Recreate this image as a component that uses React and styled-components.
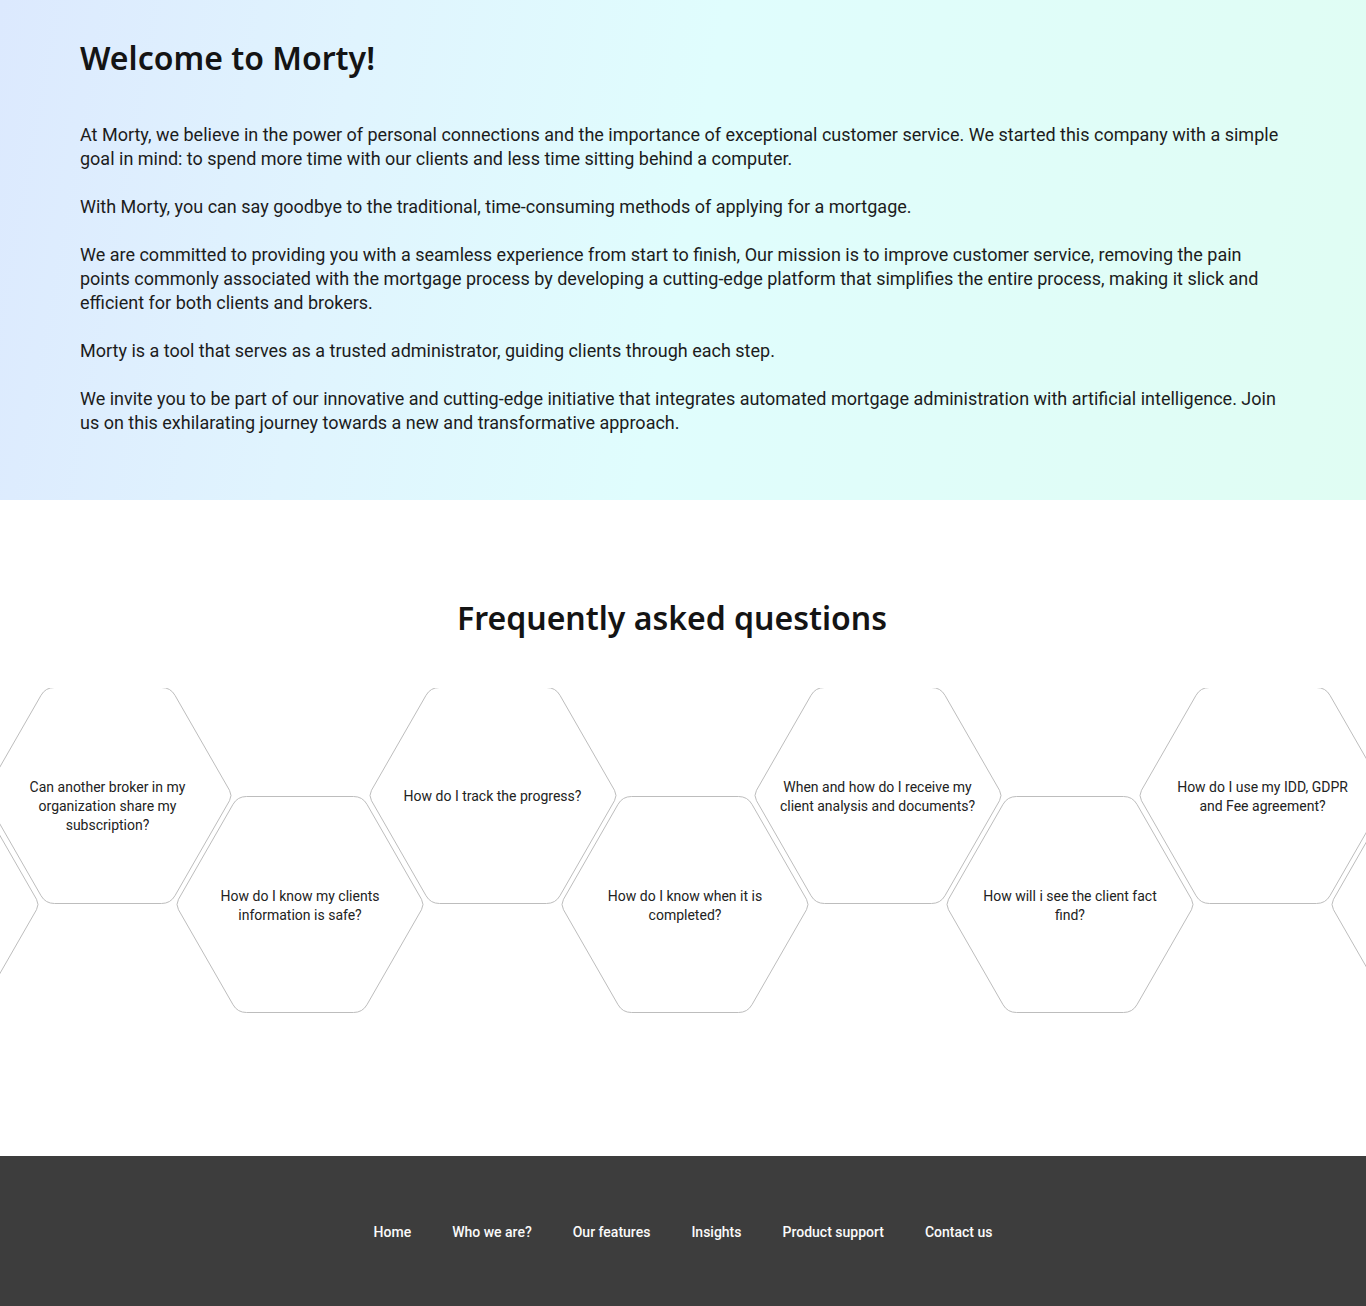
import React from 'react';
import styled, { createGlobalStyle } from 'styled-components';

const HEX_W = 250;
const HEX_H = 217;
const STEP = 192.5;

const GlobalStyle = createGlobalStyle`
    html, body { margin: 0; padding: 0; }
    body {
        font-family: Roboto, "Liberation Sans", sans-serif;
        background: #fff;
        overflow-x: hidden;
    }
    * { box-sizing: border-box; }
`

const paragraphs = [
    'At Morty, we believe in the power of personal connections and the importance of exceptional customer service. We started this company with a simple goal in mind: to spend more time with our clients and less time sitting behind a computer.',
    'With Morty, you can say goodbye to the traditional, time-consuming methods of applying for a mortgage.',
    'We are committed to providing you with a seamless experience from start to finish, Our mission is to improve customer service, removing the pain points commonly associated with the mortgage process by developing a cutting-edge platform that simplifies the entire process, making it slick and efficient for both clients and brokers.',
    'Morty is a tool that serves as a trusted administrator, guiding clients through each step.',
    'We invite you to be part of our innovative and cutting-edge initiative that integrates automated mortgage administration with artificial intelligence. Join us on this exhilarating journey towards a new and transformative approach.',
];

// low = sits half a cell lower in the honeycomb
const questions = [
    { text: '', low: true },
    { text: 'Can another broker in my organization share my subscription?' },
    { text: 'How do I know my clients information is safe?', low: true },
    { text: 'How do I track the progress?' },
    { text: 'How do I know when it is completed?', low: true },
    { text: 'When and how do I receive my client analysis and documents?' },
    { text: 'How will i see the client fact find?', low: true },
    { text: 'How do I use my IDD, GDPR and Fee agreement?' },
    { text: '', low: true },
];

const links = ['Home', 'Who we are?', 'Our features', 'Insights', 'Product support', 'Contact us'];

// rounded hexagon outline, sharper at the side points
const hexPath = (w, h) => {
    const pts = [
        [0.5, h / 2, 6], [w * 0.25, 0.5, 9], [w * 0.75, 0.5, 9],
        [w - 0.5, h / 2, 6], [w * 0.75, h - 0.5, 9], [w * 0.25, h - 0.5, 9],
    ];
    const toward = (from, to, r) => {
        const dx = to[0] - from[0], dy = to[1] - from[1];
        const len = Math.hypot(dx, dy);
        return [from[0] + dx * r / len, from[1] + dy * r / len];
    };
    let d = '';
    pts.forEach((p, i) => {
        const prev = pts[(i + pts.length - 1) % pts.length];
        const next = pts[(i + 1) % pts.length];
        const a = toward(p, prev, p[2]);
        const b = toward(p, next, p[2]);
        d += (i === 0 ? 'M' : 'L') + a[0].toFixed(2) + ' ' + a[1].toFixed(2);
        d += 'Q' + p[0] + ' ' + p[1] + ' ' + b[0].toFixed(2) + ' ' + b[1].toFixed(2);
    });
    return d + 'Z';
};
const HEX_D = hexPath(HEX_W, HEX_H);

const Hexagon = ({ text, low }) => (
    <HexCell $low={low}>
        <HexOutline width={HEX_W} height={HEX_H} viewBox={`0 0 ${HEX_W} ${HEX_H}`}>
            <path d={HEX_D} fill="#fff" stroke="#bdbdbd" strokeWidth="1" />
        </HexOutline>
        {text && <Question>{text}</Question>}
    </HexCell>
);

const App = () => {
    return (
        <Page>
            <GlobalStyle />
            <Intro>
                <Title>Welcome to Morty!</Title>
                <Body>
                    {paragraphs.map((p, i) => <p key={i}>{p}</p>)}
                </Body>
            </Intro>

            <Faq>
                <FaqTitle>Frequently asked questions</FaqTitle>
                <HoneycombWrapper>
                    <Honeycomb>
                        {questions.map((q, i) => <Hexagon key={i} text={q.text} low={q.low} />)}
                    </Honeycomb>
                </HoneycombWrapper>
            </Faq>

            <Footer>
                <Nav>
                    {links.map(l => <NavLink key={l} href="#">{l}</NavLink>)}
                </Nav>
            </Footer>
        </Page>
    );
};
export default App;

const Page = styled.div`
    width: 100%;
    overflow: hidden;
`
const Intro = styled.section`
    height: 500px;
    padding: 40px 80px 0 80px;
    background: linear-gradient(100deg, #dce9fe 0%, #e0f4fe 25%, #e0fdfd 50%, #e0fdf8 75%, #e0fdf3 100%);
`
const Title = styled.h1`
    margin: 0;
    font-family: "Noto Sans", "DejaVu Sans", sans-serif;
    font-weight: 600;
    font-size: 32px;
    line-height: 36px;
    color: #141414;
`
const Body = styled.div`
    margin-top: 47px;
    p{
        margin: 0 0 24px 0;
        font-size: 18px;
        line-height: 24px;
        color: #1c1c1c;
    }
`
const Faq = styled.section`
    height: 656px;
    padding-top: 98px;
    background: #fff;
`
const FaqTitle = styled.h2`
    margin: 0 22px 50px 0;
    text-align: center;
    font-family: "Noto Sans", "DejaVu Sans", sans-serif;
    font-weight: 600;
    font-size: 32px;
    line-height: 40px;
    color: #141414;
`
const HoneycombWrapper = styled.div`
    width: 100%;
    overflow: hidden;
`
const Honeycomb = styled.div`
    display: flex;
    align-items: flex-start;
    margin-left: -210px;
    margin-top: -1px;
    height: 327px;
`
const HexCell = styled.div`
    position: relative;
    flex-shrink: 0;
    width: ${HEX_W}px;
    height: ${HEX_H}px;
    display: flex;
    align-items: center;
    justify-content: center;
    margin-top: ${p => p.$low ? '109px' : '0'};
    & + &{ margin-left: ${STEP - HEX_W}px; }
`
const HexOutline = styled.svg`
    position: absolute;
    inset: 0;
`
const Question = styled.span`
    position: relative;
    max-width: 196px;
    height: 38px;
    margin-top: 2px;
    display: flex;
    flex-direction: column;
    justify-content: safe center;
    text-align: center;
    font-size: 14px;
    line-height: 19px;
    color: #222;
`
const Footer = styled.footer`
    height: 150px;
    padding-top: 2px;
    background: #3d3d3d;
    display: flex;
    align-items: center;
    justify-content: center;
`
const Nav = styled.nav`
    display: flex;
    gap: 41px;
`
const NavLink = styled.a`
    color: #fafafa;
    text-decoration: none;
    font-size: 14px;
    font-weight: 500;
    line-height: 20px;
`
